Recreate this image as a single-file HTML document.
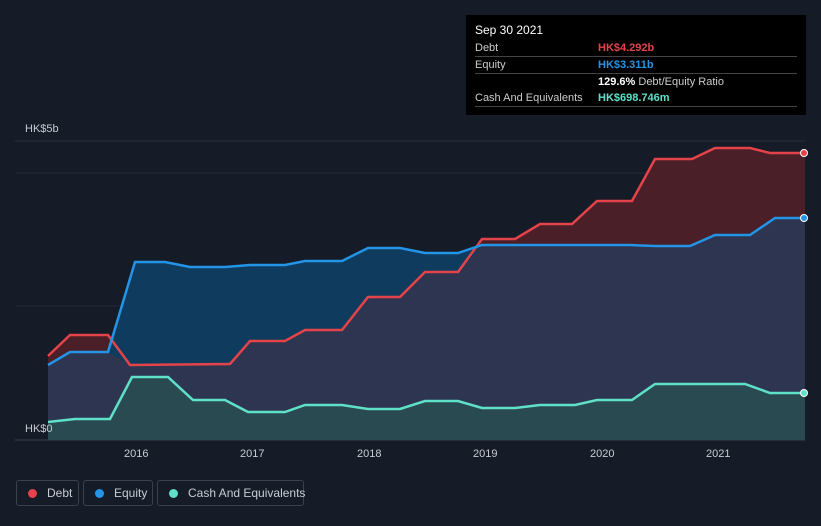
<!DOCTYPE html>
<html><head><style>
html,body{margin:0;background:#151b27;font-family:"Liberation Sans",sans-serif;width:821px;height:526px;overflow:hidden;position:relative}
.tt{position:absolute;left:466px;top:15px;width:340px;height:100px;background:#000;color:#ccc;font-size:11px}
.tt .r{position:absolute;left:9px;right:9px;border-bottom:1px solid #444;height:16px;line-height:16px}
.lg{position:absolute;top:480px;height:26px;border:1px solid #3a404c;border-radius:3px;color:#c8ccd2;font-size:12px;line-height:24px;box-sizing:border-box;white-space:nowrap}
.lg i{display:inline-block;width:9px;height:9px;border-radius:50%;margin:0 10px 0 11px;vertical-align:-1px}
</style></head><body>
<svg width="821" height="526" style="position:absolute;left:0;top:0">
<line x1="15" y1="141" x2="805" y2="141" stroke="#2c3240"/>
<line x1="15" y1="173" x2="805" y2="173" stroke="#232938"/>
<line x1="15" y1="306" x2="805" y2="306" stroke="#232938"/>
<line x1="15" y1="440" x2="805" y2="440" stroke="#3a404c"/>
<polygon fill="#4a1f27" points="48,356 70,335 108,335 130,365 230,364 250,341 285,341 305,330 342,330 368,297 400,297 425,272 458,272 482,239 515,239 540,224 572,224 597,201 632,201 655,159 692,159 715,148 750,148 770,153 805,153 805,440 48,440"/>
<polygon fill="#0f3c5e" points="48,365 70,352 108,352 135,262 165,262 190,267 225,267 250,265 285,265 305,261 342,261 368,248 400,248 425,253 458,253 482,245 540,245 630,245 655,246 690,246 715,235 750,235 775,218 805,218 805,440 48,440"/>
<polygon fill="#2e3550" points="48,365 70,352 108,352 130,365 230,364 250,341 285,341 305,330 342,330 368,297 400,297 425,272 458,272 482,245 540,245 630,245 655,246 690,246 715,235 750,235 775,218 805,218 805,440 48,440"/>
<polygon fill="#2a4a52" points="48,422 75,419 110,419 132,377 168,377 193,400 225,400 248,412 285,412 305,405 342,405 368,409 400,409 425,401 458,401 482,408 515,408 540,405 575,405 597,400 632,400 655,384 745,384 770,393 805,393 805,440 48,440"/>
<polyline fill="none" stroke="#e5434a" stroke-width="2.5" points="48,356 70,335 108,335 130,365 230,364 250,341 285,341 305,330 342,330 368,297 400,297 425,272 458,272 482,239 515,239 540,224 572,224 597,201 632,201 655,159 692,159 715,148 750,148 770,153 805,153"/>
<polyline fill="none" stroke="#2394e6" stroke-width="2.5" points="48,365 70,352 108,352 135,262 165,262 190,267 225,267 250,265 285,265 305,261 342,261 368,248 400,248 425,253 458,253 482,245 540,245 630,245 655,246 690,246 715,235 750,235 775,218 805,218"/>
<polyline fill="none" stroke="#5fe0c8" stroke-width="2.5" points="48,422 75,419 110,419 132,377 168,377 193,400 225,400 248,412 285,412 305,405 342,405 368,409 400,409 425,401 458,401 482,408 515,408 540,405 575,405 597,400 632,400 655,384 745,384 770,393 805,393"/>
<circle cx="804" cy="153" r="3.5" fill="#e5434a" stroke="#fff" stroke-width="1"/>
<circle cx="804" cy="218" r="3.5" fill="#2394e6" stroke="#fff" stroke-width="1"/>
<circle cx="804" cy="393" r="3.5" fill="#5fe0c8" stroke="#fff" stroke-width="1"/>
<g fill="#c8ccd2" font-size="11" font-family="Liberation Sans">
<text x="25" y="132">HK$5b</text><text x="25" y="432">HK$0</text>
<text x="124" y="457">2016</text><text x="240" y="457">2017</text><text x="357" y="457">2018</text><text x="473" y="457">2019</text><text x="590" y="457">2020</text><text x="706" y="457">2021</text>
</g>
</svg>
<div class="tt">
<div style="position:absolute;left:9px;top:8px;color:#fff;font-size:12px">Sep 30 2021</div>
<div class="r" style="top:25px">Debt<span style="position:absolute;left:123px;color:#e5434a;font-weight:bold">HK$4.292b</span></div>
<div class="r" style="top:42px">Equity<span style="position:absolute;left:123px;color:#2394e6;font-weight:bold">HK$3.311b</span></div>
<div class="r" style="top:59px;border:none"><span style="position:absolute;left:123px"><b style="color:#fff">129.6%</b> Debt/Equity Ratio</span></div>
<div class="r" style="top:75px">Cash And Equivalents<span style="position:absolute;left:123px;color:#5fe0c8;font-weight:bold">HK$698.746m</span></div>
</div>
<div class="lg" style="left:16px;width:63px"><i style="background:#e5434a"></i>Debt</div>
<div class="lg" style="left:83px;width:70px"><i style="background:#2394e6"></i>Equity</div>
<div class="lg" style="left:157px;width:147px"><i style="background:#5fe0c8"></i>Cash And Equivalents</div>
</body></html>
